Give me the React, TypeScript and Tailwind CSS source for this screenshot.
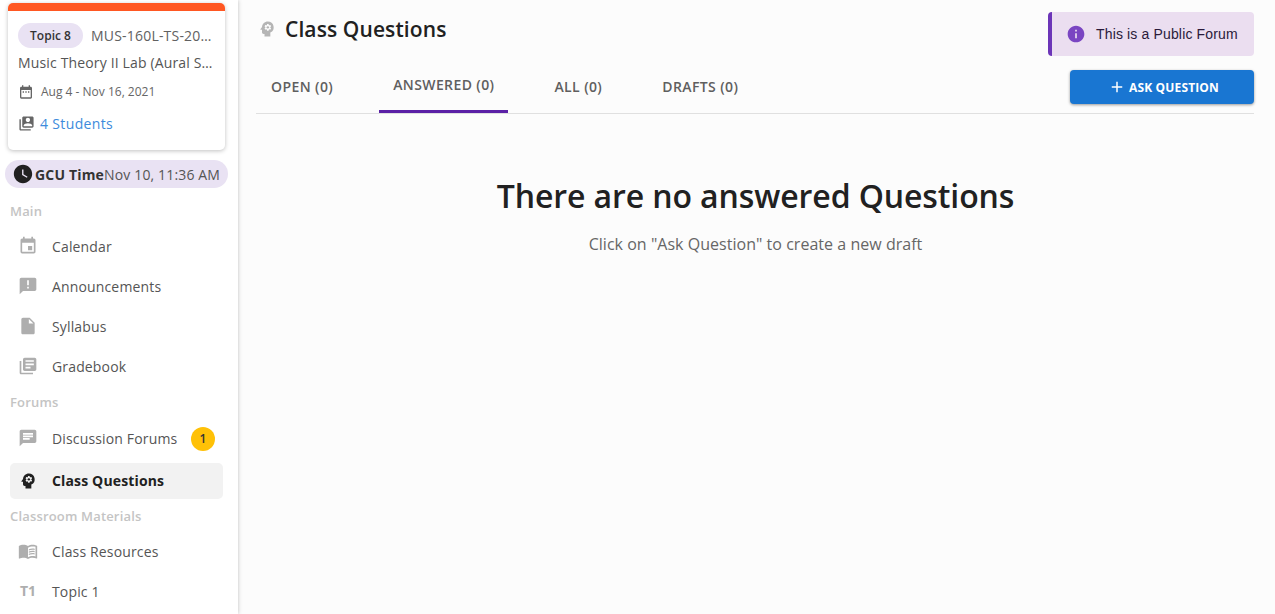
import React from 'react';
import {
  MdEvent,
  MdAnnouncement,
  MdInsertDriveFile,
  MdLibraryBooks,
  MdChat,
  MdPsychology,
  MdMenuBook,
  MdInfo,
  MdAdd,
  MdWatchLater,
  MdDateRange,
  MdSwitchAccount,
} from 'react-icons/md';

const font = { fontFamily: '"Open Sans", sans-serif' };

const NavItem: React.FC<{ icon: React.ReactNode; label: string; badge?: string; active?: boolean }> = ({
  icon,
  label,
  badge,
  active,
}) => (
  <div
    className={`flex items-center rounded-[5px] pl-[8px] pr-[8px] ${active ? 'h-[36px] bg-[#f2f2f2]' : 'h-[40px]'}`}
  >
    <div className={`flex w-[20px] justify-center ${active ? 'text-[#212121]' : 'text-[#aeaeae]'}`}>{icon}</div>
    <span
      className={`ml-[14px] flex-1 text-[14px] tracking-[0.15px] ${active ? 'pb-[2px] font-bold text-[#212121]' : 'text-[#555555]'}`}
    >
      {label}
    </span>
    {badge && (
      <span className="mt-[1px] flex h-[24px] w-[24px] items-center justify-center rounded-full bg-[#ffc107] text-[12px] font-semibold text-[#333333]">
        {badge}
      </span>
    )}
  </div>
);

const Section: React.FC<{ label: string }> = ({ label }) => (
  <div className="flex h-[18px] items-center text-[13px] font-semibold tracking-[0.17px] text-[#c4c4c4]">{label}</div>
);

const Tab: React.FC<{ label: string; active?: boolean }> = ({ label, active }) => (
  <div
    className={`flex h-[43px] items-center px-[14px] text-[14px] font-semibold tracking-[0.4px] text-[#5f5f5f] ${
      active ? 'border-b-[3px] border-[#5b21a6] pb-[12px]' : 'pb-[11px]'
    }`}
  >
    {label}
  </div>
);

export default function App() {
  return (
    <div className="flex h-[614px] w-[1275px] overflow-hidden bg-[#fcfcfc]" style={font}>
      <aside className="flex w-[238px] shrink-0 flex-col overflow-hidden bg-white shadow-[0_0_4px_rgba(0,0,0,0.25)]">
        <div className="ml-[8px] mt-[3px] h-[147px] w-[217px] shrink-0 overflow-hidden rounded-[5px] bg-white shadow-[0_1px_4px_rgba(0,0,0,0.25)]">
          <div className="h-[8px] bg-[#ff5722]" />
          <div className="pl-[10px] pr-[12px]">
            <div className="mt-[12px] flex items-center">
              <span className="flex h-[25px] w-[65px] shrink-0 items-center justify-center rounded-full bg-[#e9e2f3] text-[12px] font-semibold text-[#333333]">
                Topic 8
              </span>
              <span className="ml-[8px] truncate text-[14px] tracking-[0.2px] text-[#616161]">MUS-160L-TS-20211</span>
            </div>
            <div className="mt-[5px] truncate text-[14px] leading-[20px] tracking-[0.15px] text-[#555555]">
              Music Theory II Lab (Aural Skills)
            </div>
            <div className="mt-[9px] flex h-[20px] items-center text-[12px] text-[#666666]">
              <MdDateRange className="text-[16px] text-[#666666]" />
              <span className="ml-[7px]">Aug 4 - Nov 16, 2021</span>
            </div>
            <div className="mt-[11px] flex h-[20px] items-center text-[14px] tracking-[0.35px] text-[#3d8bdc]">
              <MdSwitchAccount className="text-[17px] text-[#666666]" />
              <span className="ml-[5px]">4 Students</span>
            </div>
          </div>
        </div>
        <div className="ml-[5px] mt-[10px] flex h-[28px] w-[223px] shrink-0 items-center rounded-full bg-[#e9e2f3] pl-[7px] text-[14px] text-[#555555]">
          <MdWatchLater className="text-[22px] text-[#212121]" />
          <span className="ml-[1px] font-bold tracking-[0.17px] text-[#333333]">GCU Time</span>
          <span className="tracking-[0.15px]">Nov 10, 11:36 AM</span>
        </div>
        <div className="mt-[15px] pl-[10px] pr-[15px]">
          <Section label="Main" />
          <div className="mt-[5px]">
            <NavItem icon={<MdEvent size={20} />} label="Calendar" />
            <NavItem icon={<MdAnnouncement size={20} />} label="Announcements" />
            <NavItem icon={<MdInsertDriveFile size={20} />} label="Syllabus" />
            <NavItem icon={<MdLibraryBooks size={20} />} label="Gradebook" />
          </div>
          <div className="mt-[8px]">
            <Section label="Forums" />
          </div>
          <div className="mt-[6px]">
            <NavItem icon={<MdChat size={20} />} label="Discussion Forums" badge="1" />
            <div className="mt-[5px]">
              <NavItem icon={<MdPsychology size={20} />} label="Class Questions" active />
            </div>
          </div>
          <div className="mt-[9px]">
            <Section label="Classroom Materials" />
          </div>
          <div className="mt-[5px]">
            <NavItem icon={<MdMenuBook size={20} />} label="Class Resources" />
            <NavItem
              icon={<span className="text-[14px] font-bold leading-none">T1</span>}
              label="Topic 1"
            />
          </div>
        </div>
      </aside>

      <main className="flex min-w-0 flex-1 flex-col pl-[18px] pr-[21px]">
        <div className="flex items-start justify-between">
          <div className="mt-[17px] flex items-center">
            <MdPsychology size={20} className="ml-[1px] text-[#b5b5b5]" />
            <h1 className="ml-[8px] text-[21px] font-semibold leading-[24px] tracking-[0.1px] text-[#212121]">
              Class Questions
            </h1>
          </div>
          <div className="mt-[12px] flex h-[44px] w-[206px] items-center rounded-[4px] border-l-[4px] border-[#6c35b8] bg-[#ebdef0] pl-[14px]">
            <MdInfo size={20} className="text-[#7a45c2]" />
            <span
              className="ml-[10px] text-[14px] tracking-[0.15px] text-[#2a1a3a]"
              style={{ fontFamily: '"Liberation Sans", sans-serif' }}
            >
              This is a Public Forum
            </span>
          </div>
        </div>
        <div className="mt-[14px] flex h-[44px] items-start justify-between border-b border-[#e0e0e0]">
          <div className="ml-[1px] flex gap-[32px]">
            <Tab label="OPEN (0)" />
            <Tab label="ANSWERED (0)" active />
            <Tab label="ALL (0)" />
            <Tab label="DRAFTS (0)" />
          </div>
          <button className="flex h-[34px] w-[184px] items-center justify-center rounded-[4px] bg-[#1976d2] pl-[3px] pt-[1px] text-[12px] font-bold tracking-[0.15px] text-white shadow-[0_1px_3px_rgba(0,0,0,0.4)]">
            <MdAdd size={18} className="-mt-[2px]" />
            <span className="ml-[3px]">ASK QUESTION</span>
          </button>
        </div>
        <div className="mt-[60px] flex flex-col items-center pl-[1px]">
          <h2 className="text-[32px] font-semibold leading-[44px] tracking-[-0.1px] text-[#212121]">
            There are no answered Questions
          </h2>
          <p className="mt-[16px] text-[16px] leading-[20px] tracking-[0.03px] text-[#666666]">
            Click on "Ask Question" to create a new draft
          </p>
        </div>
      </main>
    </div>
  );
}
